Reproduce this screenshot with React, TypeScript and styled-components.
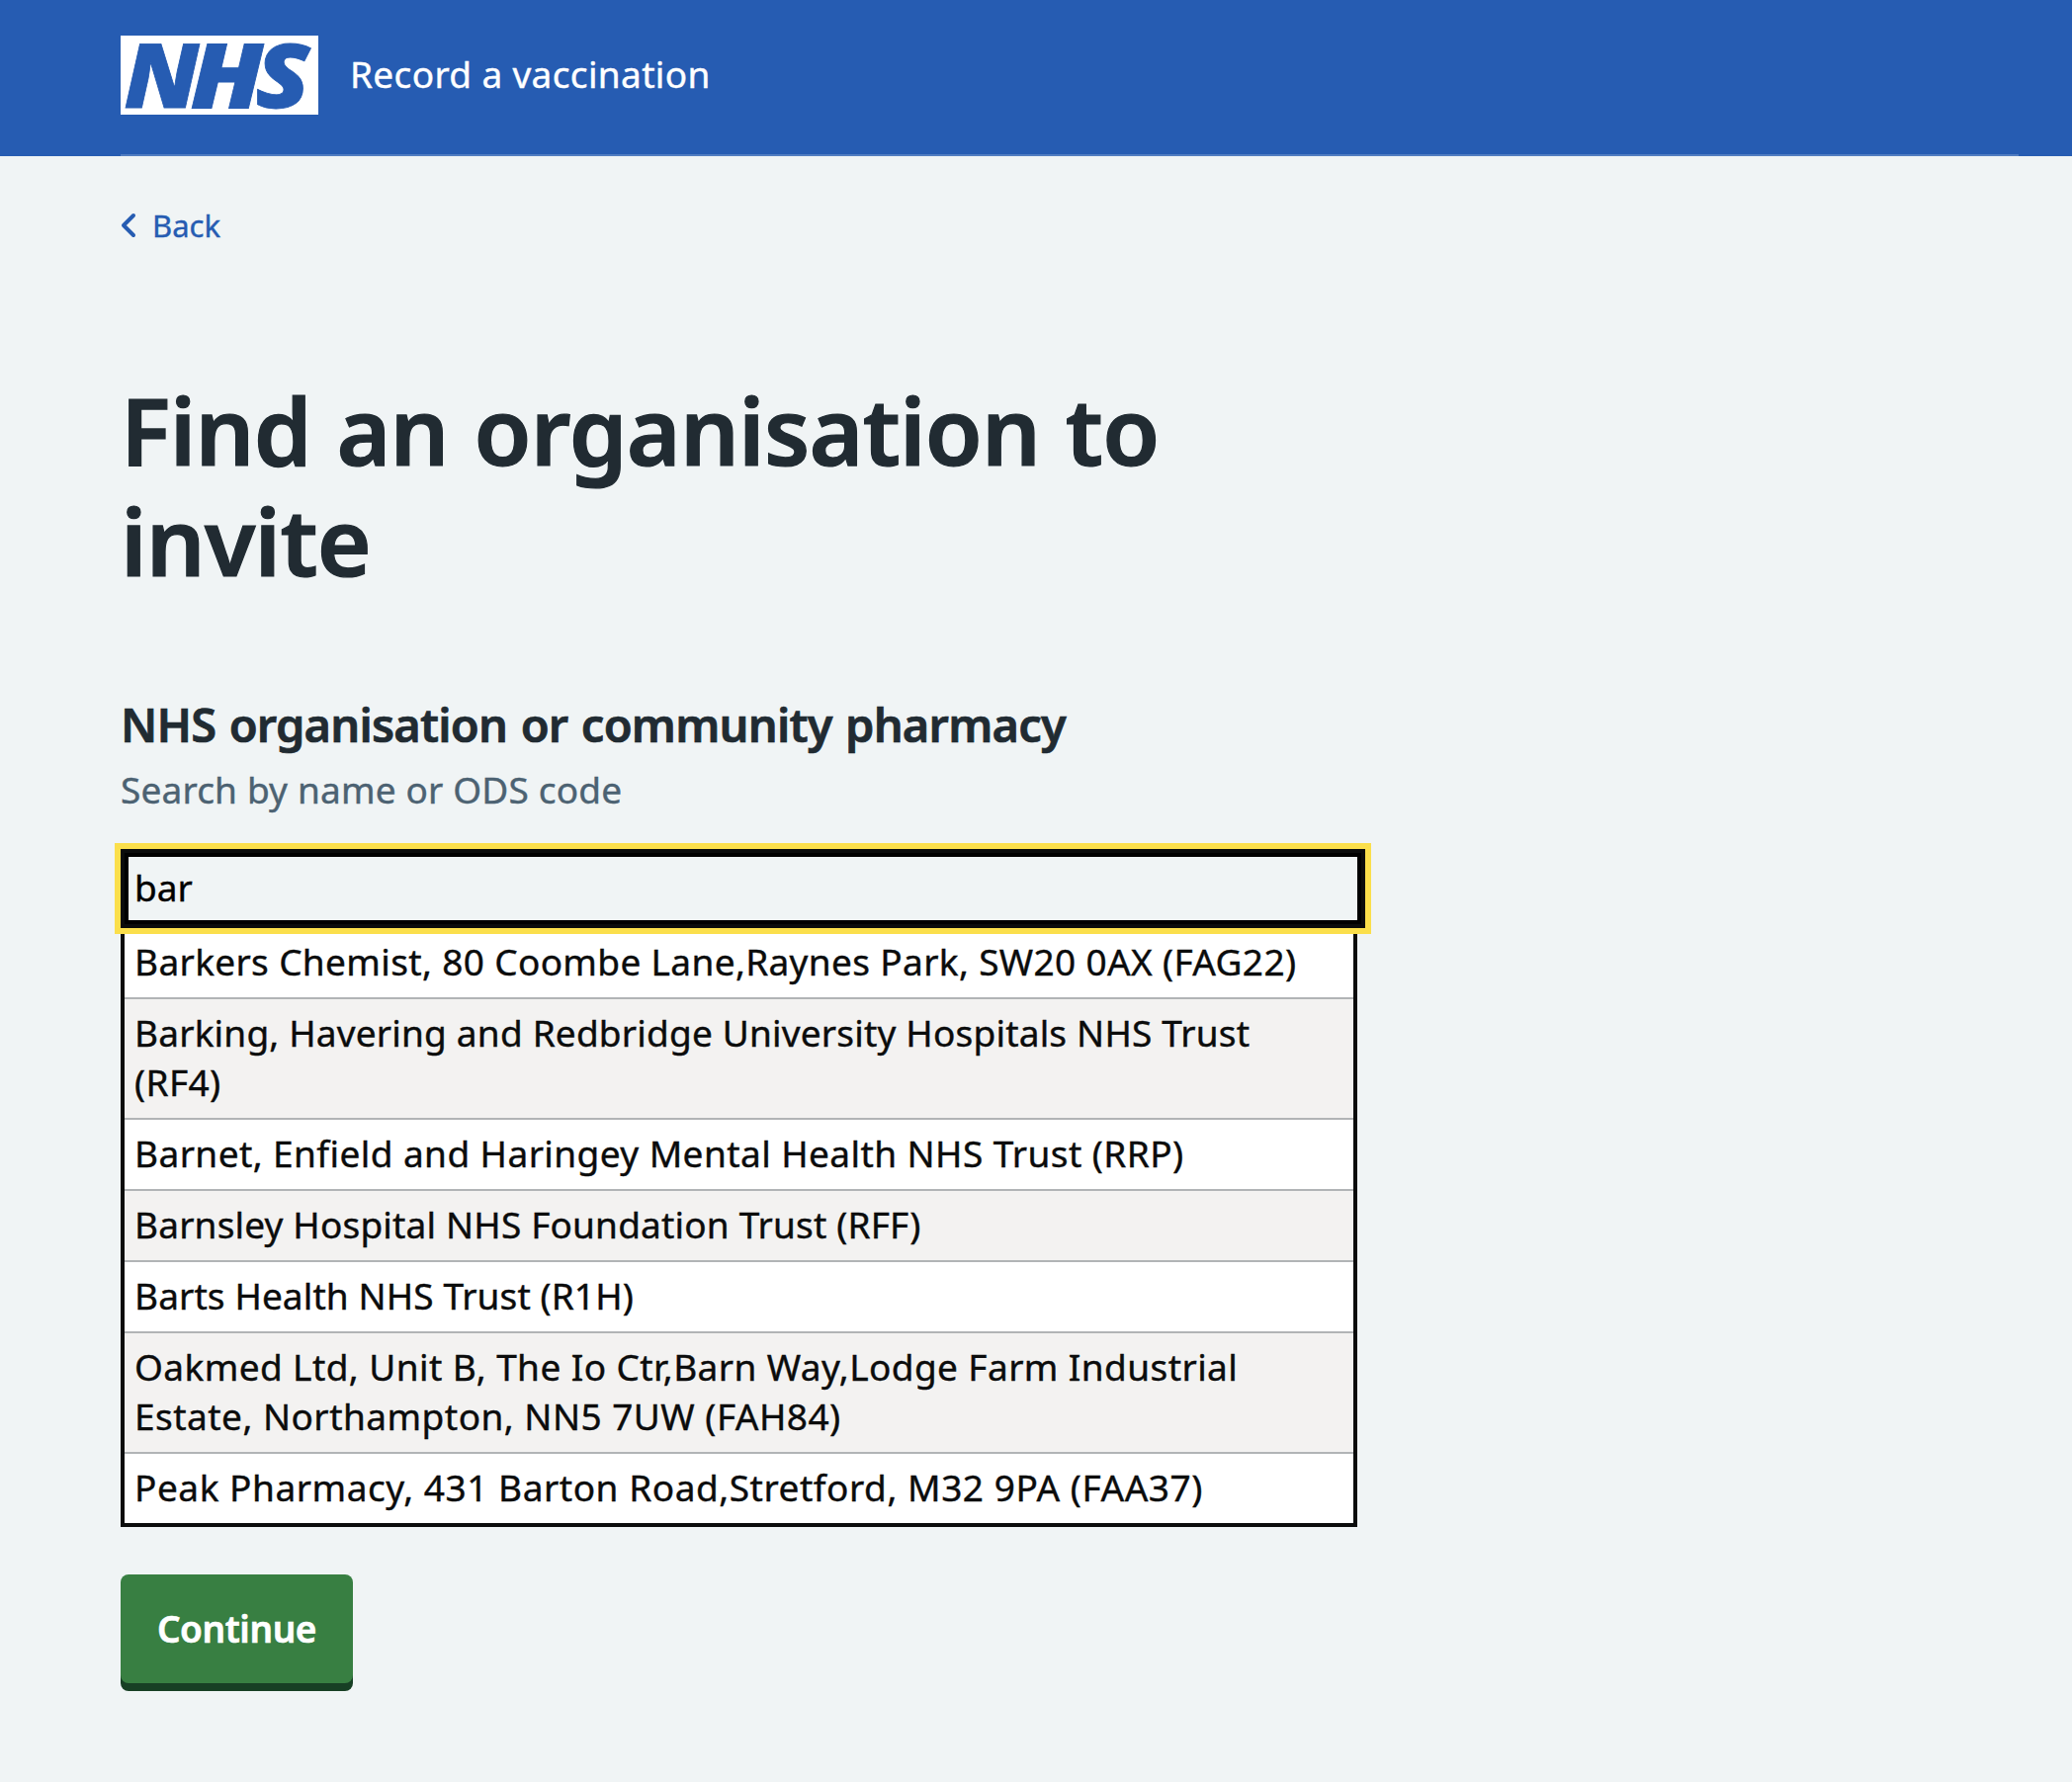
import React from "react";
import styled, { createGlobalStyle } from "styled-components";

const GlobalStyle = createGlobalStyle`
  *, *::before, *::after { box-sizing: border-box; }
  body {
    margin: 0;
    min-height: 1803px;
    background: #f0f4f5;
    color: #212b32;
    font-family: "Noto Sans", "Open Sans", sans-serif;
    font-size: 38px;
    line-height: 50px;
    -webkit-text-stroke: 0.4px currentColor;
  }
`;

const Header = styled.header`
  height: 158px;
  padding: 0 54px 0 122px;
  background: #265cb2;
`;

const HeaderInner = styled.div`
  display: flex;
  gap: 32px;
  height: 158px;
  padding-top: 36px;
  border-bottom: 2px solid #517dc1;
`;

const Logo = styled.svg`
  display: block;
  width: 200px;
  height: 80px;
  flex: none;
  overflow: visible;
`;

const LogoLetter = styled.text`
  font: italic 800 91px/1 "Open Sans", "Noto Sans", sans-serif;
  fill: #265cb2;
  stroke: #265cb2;
  stroke-width: 0.8px;
  -webkit-text-stroke: 0.8px #265cb2;
`;

const Service = styled.span`
  height: 80px;
  line-height: 78px;
  color: #fff;
  font-size: 37px;
  letter-spacing: 0.35px;
  white-space: nowrap;
`;

const Page = styled.div`
  padding: 46px 0 0 122px;
`;

const Back = styled.a`
  display: flex;
  align-items: center;
  gap: 16px;
  height: 48px;
  color: #265cb2;
  font-size: 31px;
  text-decoration: none;
`;

const Chevron = styled.svg`
  width: 16px;
  height: 26px;
`;

const Title = styled.h1`
  width: 1100px;
  margin: 127px 0 0;
  font-size: 94px;
  line-height: 112px;
  font-weight: 600;
  letter-spacing: -0.8px;
  word-spacing: 2px;
  -webkit-text-stroke-width: 1.2px;
`;

const Label = styled.h2`
  margin: 100px 0 0;
  font-size: 47px;
  line-height: 60px;
  font-weight: 600;
  letter-spacing: -0.8px;
  word-spacing: 2px;
  -webkit-text-stroke-width: 0.7px;
`;

const Hint = styled.div`
  margin-top: 11px;
  color: #4c6272;
  font-size: 37px;
  letter-spacing: 0.17px;
`;

const Combo = styled.div`
  width: 1259px;
  margin-top: 35px;
`;

const Input = styled.input`
  display: block;
  width: 100%;
  height: 80px;
  padding: 0 10px 4px;
  border: 4px solid #0b0c0c;
  border-radius: 0;
  box-shadow: inset 0 0 0 4px #000;
  outline: 6px solid #fbdf4b;
  background: transparent;
  color: #000;
  font: inherit;
  font-size: 37px;
  position: relative;
`;

const Menu = styled.ul`
  width: 1251px;
  margin: 0;
  padding: 0;
  list-style: none;
  border: 4px solid #0b0c0c;
  border-top: 0;
`;

const Option = styled.li`
  padding: 9px 10px 11px;
  background: #fff;
  border-bottom: 2px solid #b1b4b6;
  color: #0b0c0c;
  font-size: 37px;
  &:nth-child(even) { background: #f3f2f1; }
  &:last-child { border-bottom: 0; }
`;

const Line = styled.span<{ $spacing: number }>`
  display: block;
  white-space: nowrap;
  letter-spacing: ${(p) => p.$spacing}px;
`;

const Continue = styled.button`
  width: 235px;
  height: 110px;
  margin-top: 48px;
  padding: 0;
  border: 0;
  border-radius: 8px;
  background: #387f42;
  box-shadow: 0 8px 0 #173f24;
  color: #fff;
  font: inherit;
  font-size: 37px;
  font-weight: 600;
  letter-spacing: -0.4px;
  -webkit-text-stroke: 0.6px #fff;
`;

type OptionLine = { text: string; spacing: number };

const options: OptionLine[][] = [
  [{ text: "Barkers Chemist, 80 Coombe Lane,Raynes Park, SW20 0AX (FAG22)", spacing: 0.35 }],
  [
    { text: "Barking, Havering and Redbridge University Hospitals NHS Trust", spacing: 0.19 },
    { text: "(RF4)", spacing: 0.4 },
  ],
  [{ text: "Barnet, Enfield and Haringey Mental Health NHS Trust (RRP)", spacing: 0.42 }],
  [{ text: "Barnsley Hospital NHS Foundation Trust (RFF)", spacing: 0.17 }],
  [{ text: "Barts Health NHS Trust (R1H)", spacing: 0.1 }],
  [
    { text: "Oakmed Ltd, Unit B, The Io Ctr,Barn Way,Lodge Farm Industrial", spacing: 0.41 },
    { text: "Estate, Northampton, NN5 7UW (FAH84)", spacing: 0.47 },
  ],
  [{ text: "Peak Pharmacy, 431 Barton Road,Stretford, M32 9PA (FAA37)", spacing: 0.54 }],
];

export default function App() {
  return (
    <>
      <GlobalStyle />
      <Header>
        <HeaderInner>
          <Logo viewBox="0 0 200 80" aria-label="NHS">
            <rect width="200" height="80" fill="#fff" />
            <LogoLetter x="3.5" y="72.5" textLength="76" lengthAdjust="spacingAndGlyphs">N</LogoLetter>
            <LogoLetter x="70.5" y="72.5" textLength="74" lengthAdjust="spacingAndGlyphs">H</LogoLetter>
            <LogoLetter x="136.5" y="72.5" textLength="55" lengthAdjust="spacingAndGlyphs">S</LogoLetter>
          </Logo>
          <Service>Record a vaccination</Service>
        </HeaderInner>
      </Header>
      <Page>
        <Back>
          <Chevron viewBox="0 0 16 26" fill="none" stroke="currentColor" strokeWidth="4" strokeLinecap="round" strokeLinejoin="round">
            <path d="M13 3 3 13l10 10" />
          </Chevron>
          Back
        </Back>
        <Title>Find an organisation to invite</Title>
        <Label>NHS organisation or community pharmacy</Label>
        <Hint>Search by name or ODS code</Hint>
        <Combo>
          <Input defaultValue="bar" />
          <Menu>
            {options.map((lines) => (
              <Option key={lines[0].text}>
                {lines.map((line) => (
                  <Line key={line.text} $spacing={line.spacing}>{line.text}</Line>
                ))}
              </Option>
            ))}
          </Menu>
        </Combo>
        <Continue>Continue</Continue>
      </Page>
    </>
  );
}
